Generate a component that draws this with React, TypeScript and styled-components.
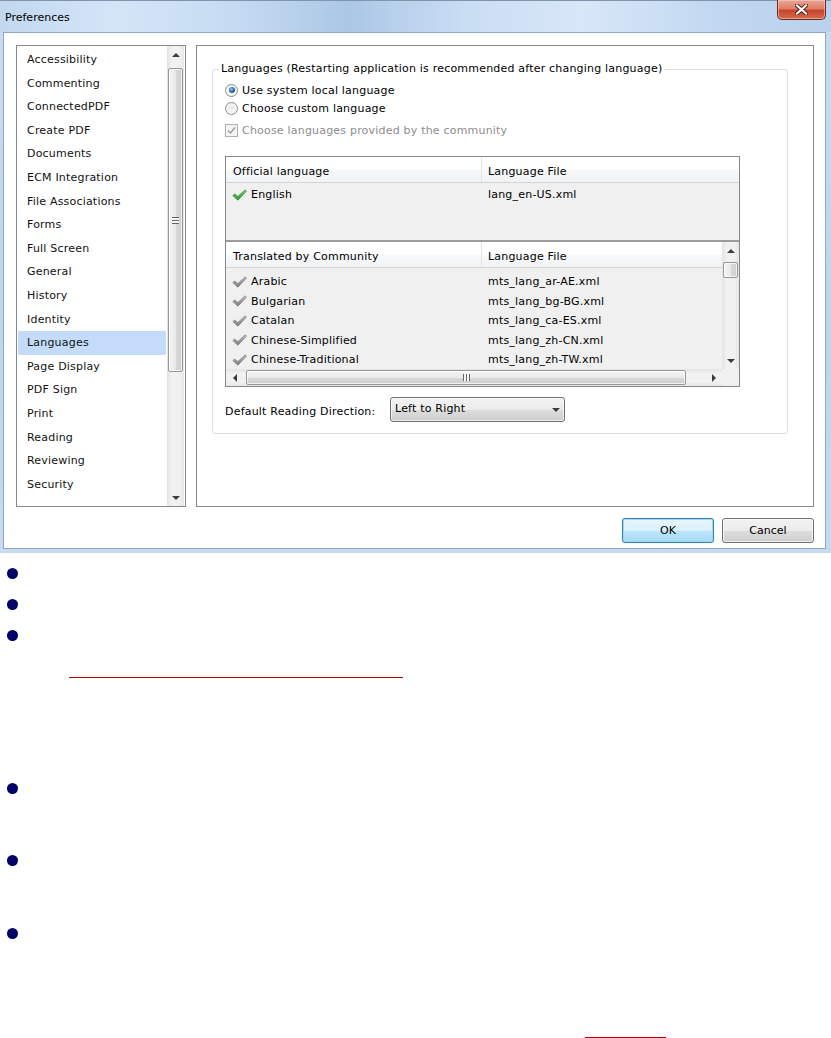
import React from 'react'
import styled, { createGlobalStyle, css } from 'styled-components'

const GlobalStyle = createGlobalStyle`
  body {
    margin: 0;
    background: #fff;
    font-family: "DejaVu Sans", Verdana, sans-serif;
    font-size: 11px;
    letter-spacing: 0.2px;
    color: #000;
  }
  * { box-sizing: border-box; }
`

type Dir = 'up' | 'down' | 'left' | 'right'

const arrowShapes: Record<Dir, ReturnType<typeof css>> = {
  up: css`border-width: 0 4px 4px 4px; border-bottom-color: #3c3c3c;`,
  down: css`border-width: 4px 4px 0 4px; border-top-color: #3c3c3c;`,
  left: css`border-width: 4px 4px 4px 0; border-right-color: #3c3c3c;`,
  right: css`border-width: 4px 0 4px 4px; border-left-color: #3c3c3c;`,
}

const Arrow = styled.span<{ $dir: Dir }>`
  width: 0;
  height: 0;
  border-style: solid;
  border-color: transparent;
  ${(p) => arrowShapes[p.$dir]}
`

/* window frame */

const Window = styled.div`
  width: 831px;
  height: 553px;
  display: flex;
  flex-direction: column;
  background: linear-gradient(180deg, #c9dcf1 0%, #bed5ee 60%, #c6dbf1 100%);
  border-top: 1px solid #8095ad;
`

const TitleBar = styled.div`
  height: 31px;
  display: flex;
  align-items: flex-start;
  justify-content: space-between;
  padding: 0 5px 0 5px;
  background: linear-gradient(
    90deg,
    #c2d8f0 0%,
    #d4e5f7 14%,
    #c6dbf2 28%,
    #abc7e6 42%,
    #c9ddf3 56%,
    #d8e7f8 70%,
    #c2d8f1 86%,
    #b9d1ec 100%
  );
`

const Title = styled.div`
  padding-top: 10px;
  line-height: 13px;
  font-size: 11px;
  letter-spacing: 0;
  color: #000;
`

const CloseButton = styled.div`
  width: 49px;
  height: 20px;
  margin-top: -1px;
  border: 1px solid #6e2a1f;
  border-top: none;
  border-radius: 0 0 5px 5px;
  display: flex;
  align-items: center;
  justify-content: center;
  background: linear-gradient(180deg, #e9a797 0%, #dc7e68 45%, #c7442a 55%, #d46a50 100%);
  box-shadow: inset 0 0 0 1px rgba(255, 210, 200, 0.55);
`

const Client = styled.div`
  flex: 1;
  margin: 0 5px 4px 3px;
  border: 1px solid #8ea8c4;
  background: #fff;
  display: grid;
  grid-template-columns: 170px 618px;
  grid-template-rows: 462px 25px;
  column-gap: 10px;
  row-gap: 11px;
  padding: 12px 11px 5px 12px;
`

/* left category list */

const CategoryBox = styled.div`
  border: 1px solid #828790;
  display: flex;
  background: #fff;
`

const CategoryItems = styled.div`
  flex: 1;
  padding-top: 2px;
`

const CategoryItem = styled.div<{ $selected?: boolean }>`
  height: 23.6px;
  line-height: 24.6px;
  margin: 0 1px;
  padding-left: 9px;
  color: #111;
  background: ${(p) => (p.$selected ? '#c4dcfa' : 'transparent')};
`

const VScroll = styled.div<{ $gap?: number }>`
  width: 17px;
  margin-right: ${(p) => p.$gap ?? 0}px;
  display: flex;
  flex-direction: column;
  background: linear-gradient(90deg, #e3e3e3 0%, #f1f1f1 25%, #f1f1f1 75%, #e6e6e6 100%);
`

const HScroll = styled.div`
  height: 17px;
  display: flex;
  background: linear-gradient(180deg, #e3e3e3 0%, #f1f1f1 25%, #f1f1f1 75%, #e6e6e6 100%);
`

const ScrollButton = styled.div`
  width: 17px;
  height: 17px;
  flex: none;
  display: flex;
  align-items: center;
  justify-content: center;
`

const Track = styled.div<{ $horizontal?: boolean }>`
  flex: 1;
  display: flex;
  flex-direction: ${(p) => (p.$horizontal ? 'row' : 'column')};
`

const Thumb = styled.div<{ $start: number; $size: number; $horizontal?: boolean }>`
  display: flex;
  align-items: center;
  justify-content: center;
  border: 1px solid #979797;
  border-radius: 2px;
  ${(p) =>
    p.$horizontal
      ? css`
          margin-left: ${p.$start}px;
          width: ${p.$size}px;
          height: 15px;
          margin-top: 1px;
          background: linear-gradient(180deg, #f4f4f4 0%, #e9e9e9 50%, #d9d9d9 51%, #cfcfcf 100%);
        `
      : css`
          margin-top: ${p.$start}px;
          height: ${p.$size}px;
          width: 15px;
          margin-left: 1px;
          background: linear-gradient(90deg, #f4f4f4 0%, #e9e9e9 50%, #d9d9d9 51%, #cfcfcf 100%);
        `}
  box-shadow: inset 0 0 0 1px rgba(255, 255, 255, 0.7);
`

const Grip = styled.span<{ $horizontal?: boolean }>`
  width: 7px;
  height: 7px;
  background: repeating-linear-gradient(
    ${(p) => (p.$horizontal ? '90deg' : '180deg')},
    #666 0 1px,
    #f6f6f6 1px 3px
  );
`

/* right panel */

const Panel = styled.div`
  border: 1px solid #828790;
  background: #fff;
`

const Group = styled.fieldset`
  margin: 16px 25px 0 15px;
  padding: 5px 47px 11px 12px;
  border: 1px solid #d5dfe5;
  border-radius: 3px;
  min-width: 0;
`

const Legend = styled.legend`
  padding: 0 2px;
  margin-left: -6px;
  line-height: 14px;
  color: #000;
`

const OptionRow = styled.label<{ $disabled?: boolean; $spaced?: boolean }>`
  height: 18px;
  display: flex;
  align-items: center;
  gap: 4px;
  margin-top: ${(p) => (p.$spaced ? 4 : 0)}px;
  color: ${(p) => (p.$disabled ? '#8d8d8d' : '#000')};
`

const Radio = styled.span<{ $checked?: boolean }>`
  width: 13px;
  height: 13px;
  border-radius: 50%;
  border: 1px solid #8a8a8a;
  background: radial-gradient(circle at 50% 45%, #e4e4e4 0%, #f4f4f4 45%, #ffffff 100%);
  display: flex;
  align-items: center;
  justify-content: center;
  &::after {
    content: '';
    width: 6px;
    height: 6px;
    border-radius: 50%;
    display: ${(p) => (p.$checked ? 'block' : 'none')};
    background: radial-gradient(circle at 40% 35%, #8cc4ee 0%, #2766a6 55%, #123f70 100%);
  }
`

const CheckBox = styled.span`
  width: 13px;
  height: 13px;
  border: 1px solid #b0b0b0;
  background: #f4f4f4;
  display: flex;
  align-items: center;
  justify-content: center;
`

const TableFrame = styled.div`
  margin-top: 17px;
  width: 515px;
  border: 1px solid #828790;
  background: #f0f0f0;
`

const HeaderRow = styled.div`
  height: 26px;
  display: grid;
  grid-template-columns: 255px 1fr;
  border-bottom: 1px solid #d5d5d5;
  background: linear-gradient(180deg, #ffffff 0%, #ffffff 45%, #f7f8f9 55%, #f2f3f5 100%);
`

const HeaderCell = styled.div<{ $first?: boolean }>`
  display: flex;
  align-items: center;
  padding: 3px 0 0 ${(p) => (p.$first ? 7 : 6)}px;
  border-left: ${(p) => (p.$first ? 'none' : '1px solid #e2e4e7')};
`

const OfficialBody = styled.div`
  height: 59px;
  padding-top: 2px;
  border-bottom: 2px solid #9c9c9c;
`

const Row = styled.div`
  height: 19.5px;
  display: grid;
  grid-template-columns: 255px 1fr;
  align-items: center;
`

const LangCell = styled.div`
  display: flex;
  align-items: center;
  gap: 4px;
  padding-left: 6px;
`

const FileCell = styled.div`
  padding-left: 7px;
`

const CommunityGrid = styled.div`
  display: grid;
  grid-template-columns: 1fr 17px;
  grid-template-rows: 127px 17px;
`

const CommunityList = styled.div`
  overflow: hidden;
`

const CommunityRows = styled.div`
  padding-top: 4px;
`

const Corner = styled.div`
  background: #f0f0f0;
`

const DirectionRow = styled.div`
  margin-top: 10px;
  display: flex;
  align-items: center;
`

const DirectionLabel = styled.span`
  width: 165px;
  padding-top: 3px;
`

const Select = styled.div`
  width: 175px;
  height: 25px;
  border: 1px solid #707070;
  border-radius: 3px;
  display: flex;
  align-items: center;
  justify-content: space-between;
  padding: 0 4px 3px 4px;
  background: linear-gradient(180deg, #f2f2f2 0%, #ebebeb 50%, #dddddd 51%, #cfcfcf 100%);
  box-shadow: inset 0 0 0 1px rgba(255, 255, 255, 0.6);
  span:last-child {
    margin-top: 3px;
  }
`

/* buttons */

const ButtonRow = styled.div`
  grid-column: 1 / -1;
  display: flex;
  justify-content: flex-end;
  gap: 8px;
`

const DialogButton = styled.button<{ $default?: boolean }>`
  width: 92px;
  height: 25px;
  border-radius: 3px;
  font: inherit;
  color: #000;
  padding: 0 0 1px;
  ${(p) =>
    p.$default
      ? css`
          border: 1px solid #3c7fb1;
          background: linear-gradient(180deg, #eaf6fd 0%, #d9f0fc 50%, #bee6fd 51%, #a7d9f5 100%);
          box-shadow: inset 0 0 0 1px #9ad8f8, 0 0 1px #5bb9ec;
        `
      : css`
          border: 1px solid #707070;
          background: linear-gradient(180deg, #f2f2f2 0%, #ebebeb 50%, #dddddd 51%, #cfcfcf 100%);
          box-shadow: inset 0 0 0 1px rgba(255, 255, 255, 0.7);
        `}
`

/* notes below the dialog */

const Notes = styled.ul`
  list-style: none;
  margin: 0;
  padding: 15px 0 0 7px;
`

const Note = styled.li<{ $height?: number }>`
  height: ${(p) => (p.$height ? `${p.$height}px` : 'auto')};
  &::before {
    content: '';
    display: block;
    width: 11px;
    height: 11px;
    border-radius: 50%;
    background: #000066;
  }
`

const LinkRule = styled.span<{ $left: number; $top: number; $width: number }>`
  display: block;
  margin-left: ${(p) => p.$left}px;
  margin-top: ${(p) => p.$top}px;
  width: ${(p) => p.$width}px;
  border-bottom: 1px solid #b40000;
`

const CheckMark: React.FC<{ green?: boolean }> = ({ green }) => (
  <svg width="15" height="12" viewBox="0 0 15 12">
    <defs>
      <linearGradient id={green ? 'chk-g' : 'chk-s'} x1="0" y1="0" x2="0" y2="1">
        <stop offset="0" stopColor={green ? '#7fd87f' : '#c4c4c4'} />
        <stop offset="1" stopColor={green ? '#239a23' : '#7a7a7a'} />
      </linearGradient>
    </defs>
    <path
      d="M0.8 6.6 L2.8 5 L5.8 7.6 L13.2 0.8 L14.4 2.2 L5.9 11.2 Z"
      fill={`url(#${green ? 'chk-g' : 'chk-s'})`}
      stroke={green ? '#1f7a1f' : '#6e6e6e'}
      strokeWidth="0.6"
      strokeLinejoin="round"
    />
  </svg>
)

const categories = [
  'Accessibility',
  'Commenting',
  'ConnectedPDF',
  'Create PDF',
  'Documents',
  'ECM Integration',
  'File Associations',
  'Forms',
  'Full Screen',
  'General',
  'History',
  'Identity',
  'Languages',
  'Page Display',
  'PDF Sign',
  'Print',
  'Reading',
  'Reviewing',
  'Security',
]

const community = [
  ['Arabic', 'mts_lang_ar-AE.xml'],
  ['Bulgarian', 'mts_lang_bg-BG.xml'],
  ['Catalan', 'mts_lang_ca-ES.xml'],
  ['Chinese-Simplified', 'mts_lang_zh-CN.xml'],
  ['Chinese-Traditional', 'mts_lang_zh-TW.xml'],
]

const App: React.FC = () => {
  return (
    <>
      <GlobalStyle />
      <Window>
        <TitleBar>
          <Title>Preferences</Title>
          <CloseButton>
            <svg width="13" height="11" viewBox="0 0 13 11">
              <path d="M2 1.5 L11 9.5 M11 1.5 L2 9.5" stroke="#5a1a10" strokeWidth="4" strokeLinecap="square" />
              <path d="M2 1.5 L11 9.5 M11 1.5 L2 9.5" stroke="#fff" strokeWidth="2.2" strokeLinecap="square" />
            </svg>
          </CloseButton>
        </TitleBar>
        <Client>
          <CategoryBox>
            <CategoryItems>
              {categories.map((c) => (
                <CategoryItem key={c} $selected={c === 'Languages'}>
                  {c}
                </CategoryItem>
              ))}
            </CategoryItems>
            <VScroll $gap={1}>
              <ScrollButton>
                <Arrow $dir="up" />
              </ScrollButton>
              <Track>
                <Thumb $start={5} $size={304}>
                  <Grip />
                </Thumb>
              </Track>
              <ScrollButton>
                <Arrow $dir="down" />
              </ScrollButton>
            </VScroll>
          </CategoryBox>

          <Panel>
            <Group>
              <Legend>Languages (Restarting application is recommended after changing language)</Legend>
              <OptionRow>
                <Radio $checked />
                Use system local language
              </OptionRow>
              <OptionRow>
                <Radio />
                Choose custom language
              </OptionRow>
              <OptionRow $disabled $spaced>
                <CheckBox>
                  <svg width="9" height="9" viewBox="0 0 9 9">
                    <path d="M1 4.5 L3.5 7 L8 1.5" fill="none" stroke="#9a9a9a" strokeWidth="1.4" />
                  </svg>
                </CheckBox>
                Choose languages provided by the community
              </OptionRow>

              <TableFrame>
                <HeaderRow>
                  <HeaderCell $first>Official language</HeaderCell>
                  <HeaderCell>Language File</HeaderCell>
                </HeaderRow>
                <OfficialBody>
                  <Row>
                    <LangCell>
                      <CheckMark green />
                      English
                    </LangCell>
                    <FileCell>lang_en-US.xml</FileCell>
                  </Row>
                </OfficialBody>

                <CommunityGrid>
                  <CommunityList>
                    <HeaderRow>
                      <HeaderCell $first>Translated by Community</HeaderCell>
                      <HeaderCell>Language File</HeaderCell>
                    </HeaderRow>
                    <CommunityRows>
                      {community.map(([lang, file]) => (
                        <Row key={lang}>
                          <LangCell>
                            <CheckMark />
                            {lang}
                          </LangCell>
                          <FileCell>{file}</FileCell>
                        </Row>
                      ))}
                    </CommunityRows>
                  </CommunityList>
                  <VScroll>
                    <ScrollButton>
                      <Arrow $dir="up" />
                    </ScrollButton>
                    <Track>
                      <Thumb $start={3} $size={16} />
                    </Track>
                    <ScrollButton>
                      <Arrow $dir="down" />
                    </ScrollButton>
                  </VScroll>
                  <HScroll>
                    <ScrollButton>
                      <Arrow $dir="left" />
                    </ScrollButton>
                    <Track $horizontal>
                      <Thumb $horizontal $start={3} $size={440}>
                        <Grip $horizontal />
                      </Thumb>
                    </Track>
                    <ScrollButton>
                      <Arrow $dir="right" />
                    </ScrollButton>
                  </HScroll>
                  <Corner />
                </CommunityGrid>
              </TableFrame>

              <DirectionRow>
                <DirectionLabel>Default Reading Direction:</DirectionLabel>
                <Select>
                  <span>Left to Right</span>
                  <Arrow $dir="down" />
                </Select>
              </DirectionRow>
            </Group>
          </Panel>

          <ButtonRow>
            <DialogButton $default>OK</DialogButton>
            <DialogButton>Cancel</DialogButton>
          </ButtonRow>
        </Client>
      </Window>

      <Notes>
        <Note $height={31} />
        <Note $height={31} />
        <Note $height={153}>
          <LinkRule $left={62} $top={36} $width={334} />
        </Note>
        <Note $height={72} />
        <Note $height={73} />
        <Note>
          <LinkRule $left={578} $top={98} $width={81} />
        </Note>
      </Notes>
    </>
  )
}

export default App
